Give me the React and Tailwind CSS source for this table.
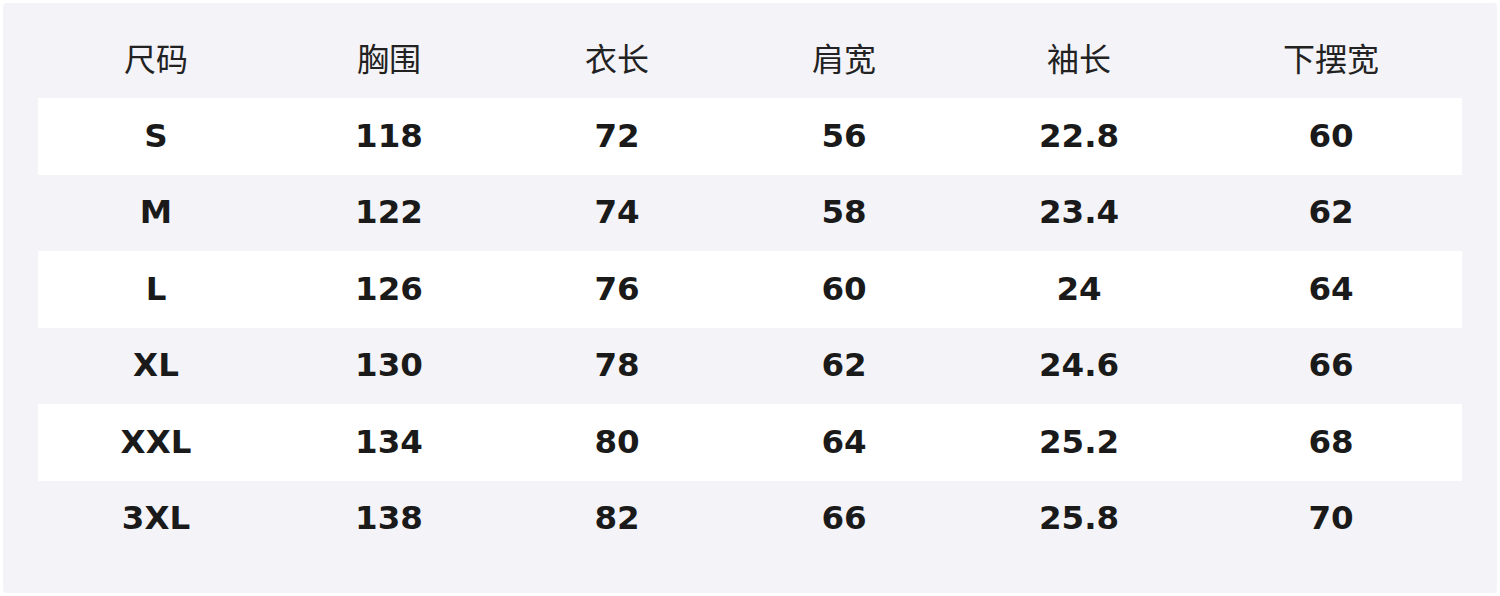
const headers = ['尺码', '胸围', '衣长', '肩宽', '袖长', '下摆宽'];

const rows = [
  ['S', '118', '72', '56', '22.8', '60'],
  ['M', '122', '74', '58', '23.4', '62'],
  ['L', '126', '76', '60', '24', '64'],
  ['XL', '130', '78', '62', '24.6', '66'],
  ['XXL', '134', '80', '64', '25.2', '68'],
  ['3XL', '138', '82', '66', '25.8', '70'],
];

const cols = 'grid grid-cols-[236px_230px_226px_228px_242px_1fr]';

export default function App() {
  return (
    <div className="w-[1500px] h-[596px] bg-white p-[3px]">
      <div className="h-full bg-[#f4f3f8] rounded-sm px-[35px] pt-[32px] pb-[36px]">
        {/* Header */}
        <div className={`${cols} h-[44px] mb-[19px] items-center text-[32px] text-[#222] font-['Noto_Sans_CJK_SC',sans-serif]`}>
          {headers.map((h) => (
            <div key={h} className="text-center leading-[44px]">{h}</div>
          ))}
        </div>

        {/* Rows */}
        {rows.map((r, i) => (
          <div
            key={r[0]}
            className={`${cols} h-[76.5px] items-center ${i % 2 === 0 ? 'bg-white' : ''} text-[32.5px] font-bold text-[#1a1a1a] font-['DejaVu_Sans',sans-serif]`}
          >
            {r.map((v, j) => (
              <div key={j} className="text-center">{v}</div>
            ))}
          </div>
        ))}
      </div>
    </div>
  );
}
